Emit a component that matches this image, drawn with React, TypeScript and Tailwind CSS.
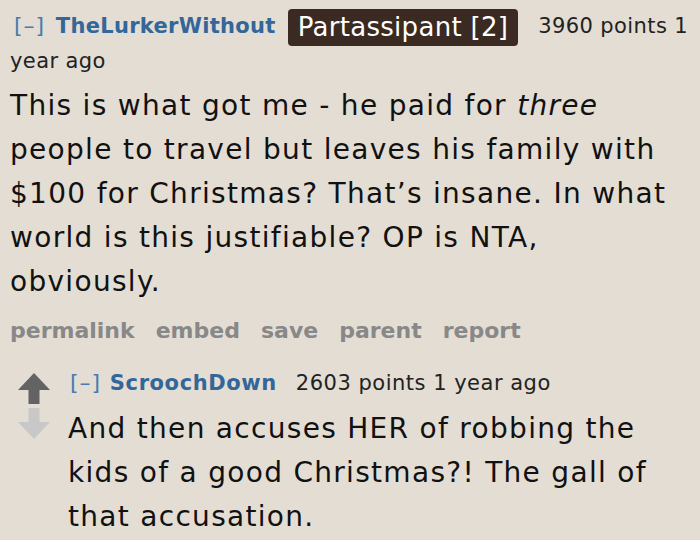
export default function App() {
  const font = { fontFamily: '"DejaVu Sans", Verdana, sans-serif' };
  return (
    <div className="w-[700px] h-[540px] overflow-hidden bg-[#e3ddd4]" style={font}>
      <div className="pl-[10px] pt-[8px] pr-2">
        <div className="text-[21px] leading-[35px] text-[#222] whitespace-nowrap">
          <span className="ml-[4px] text-[#4a7bb0] text-[22px] tracking-[1px]">[–]</span>{" "}
          <span className="ml-[4px] text-[#369] font-bold tracking-[0.3px]">TheLurkerWithout</span>
          <span className="inline-block bg-[#3b2a22] text-white rounded-[4px] px-[10px] text-[26px] tracking-[0.3px] leading-[37px] h-[37px] my-[-2px] ml-[12px] mr-[20px] align-middle">Partassipant [2]</span>
          <span className="tracking-[0.4px]">3960 points 1</span>
          <br />
          <span className="tracking-[0.4px]">year ago</span>
        </div>
        <div className="mt-[5px] text-[28px] leading-[44px] tracking-[1.3px] text-[#111] whitespace-nowrap">
          <div>This is what got me - he paid for <em>three</em></div>
          <div>people to travel but leaves his family with</div>
          <div>$100 for Christmas? That’s insane. In what</div>
          <div>world is this justifiable? OP is NTA,</div>
          <div>obviously.</div>
        </div>
        <div className="mt-[12px] flex gap-[21px] text-[22px] leading-[30px] font-bold text-[#888]">
          <span>permalink</span>
          <span>embed</span>
          <span>save</span>
          <span>parent</span>
          <span>report</span>
        </div>
        <div className="mt-[22px] flex">
          <div className="ml-[8px] w-[32px] flex flex-col pt-[5px] gap-[4px]">
            <svg width="32" height="31" viewBox="0 0 32 31"><path d="M16 0 L32 17 L21.5 17 L21.5 31 L10.5 31 L10.5 17 L0 17 Z" fill="#636363" /></svg>
            <svg width="32" height="31" viewBox="0 0 32 31"><path d="M16 31 L32 14 L21.5 14 L21.5 0 L10.5 0 L10.5 14 L0 14 Z" fill="#c8c8c8" /></svg>
          </div>
          <div className="ml-[18px]">
            <div className="text-[21px] leading-[30px] text-[#222] whitespace-nowrap">
              <span className="ml-[2px] text-[#4a7bb0] text-[22px] tracking-[1px]">[–]</span>{" "}
              <span className="ml-[2px] text-[#369] font-bold tracking-[0.6px]">ScroochDown</span>
              <span className="ml-[19px] tracking-[0.5px]">2603 points 1 year ago</span>
            </div>
            <div className="mt-[9px] text-[28px] leading-[44px] tracking-[1.3px] text-[#111] whitespace-nowrap">
              <div>And then accuses HER of robbing the</div>
              <div>kids of a good Christmas?! The gall of</div>
              <div>that accusation.</div>
            </div>
          </div>
        </div>
      </div>
    </div>
  );
}
